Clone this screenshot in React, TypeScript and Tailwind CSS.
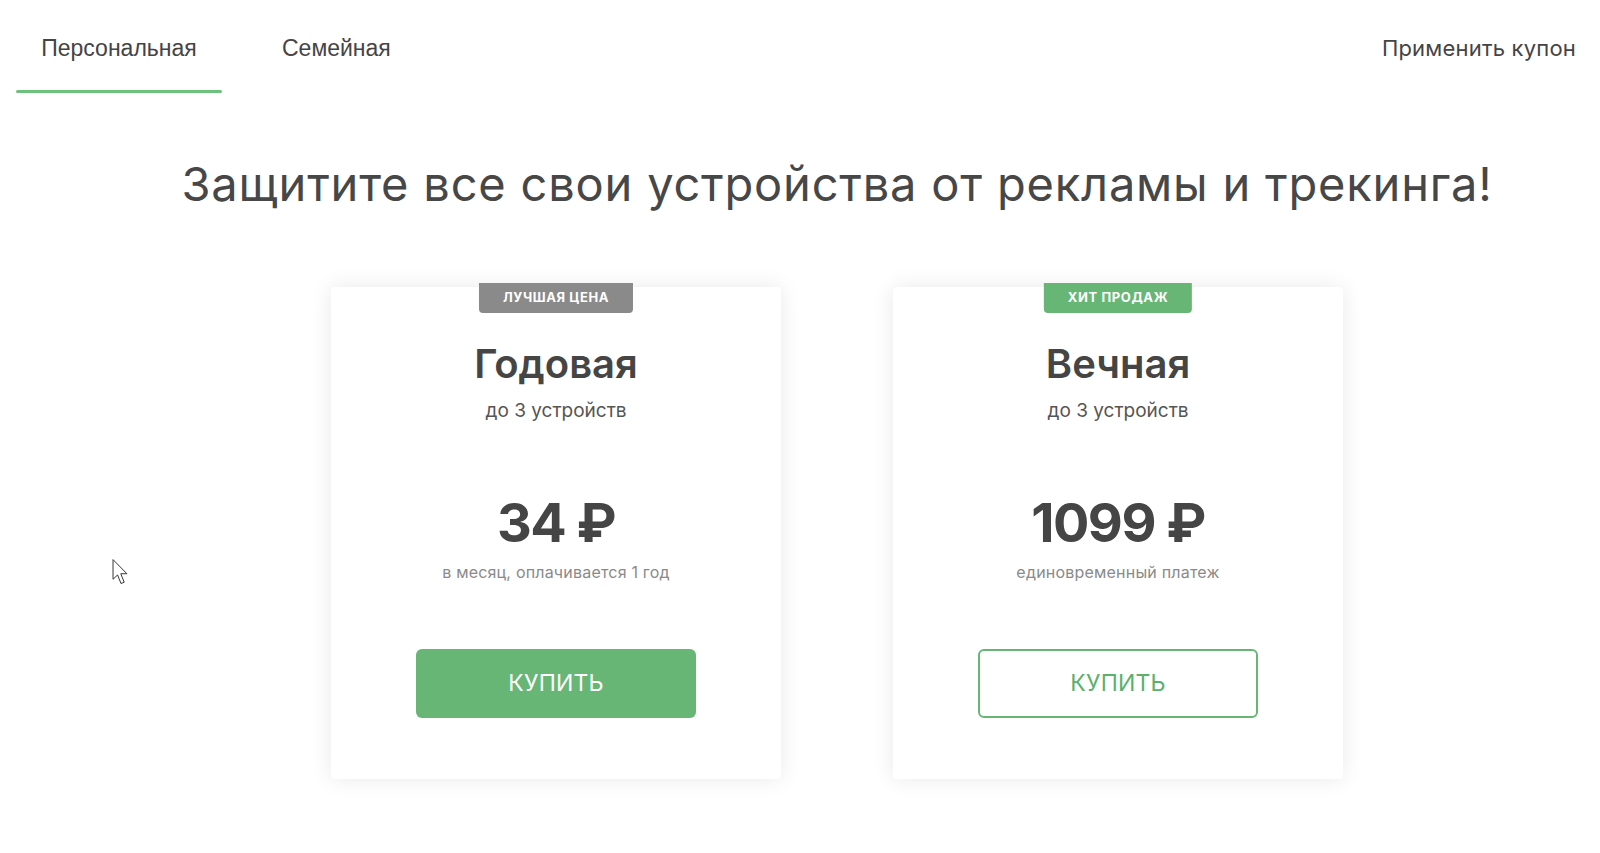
import React from "react";

const inter = { fontFamily: "Inter, 'Noto Sans', sans-serif" };

function Card({
  badge,
  badgeClass,
  title,
  price,
  caption,
  filled,
}: {
  badge: string;
  badgeClass: string;
  title: string;
  price: string;
  caption: string;
  filled: boolean;
}) {
  return (
    <div className="relative flex w-[450px] flex-col items-center rounded-[4px] bg-white pt-[53px] pb-[61px] shadow-[0_0_22px_rgba(0,0,0,0.09)]">
      <div
        className={`absolute top-[-4px] left-1/2 flex h-[30px] -translate-x-1/2 items-center rounded-b-[4px] px-[24px] text-[13px] font-bold tracking-[0.6px] text-white ${badgeClass}`}
      >
        {badge}
      </div>
      <div className="text-[40px] leading-[48px] font-semibold text-[#454545]">{title}</div>
      <div className="mt-[10px] text-[19px] leading-[25px] text-[#555]">до 3 устройств</div>
      <div className="mt-[72px] text-[54px] leading-[56px] font-bold tracking-[-1.5px] text-[#454545]">{price}</div>
      <div className="mt-[11px] text-[16px] leading-[20px] tracking-[0.2px] text-[#8a8a8a]">{caption}</div>
      <button
        className={
          filled
            ? "mt-[67px] flex h-[69px] w-[280px] items-center justify-center rounded-[6px] bg-[#67b675] text-[23px] tracking-[0.2px] text-white"
            : "mt-[67px] flex h-[69px] w-[280px] items-center justify-center rounded-[6px] border-2 border-[#67b675] bg-white text-[23px] tracking-[0.2px] text-[#5cb06b]"
        }
      >
        КУПИТЬ
      </button>
    </div>
  );
}

export default function App() {
  return (
    <div className="relative min-h-[853px] w-full bg-white" style={inter}>
      <div className="flex items-start justify-between pl-4 pr-[24px]">
        <div className="flex">
          <div className="flex w-[206px] flex-col items-center">
            <div
              className="pt-[34px] text-[23px] leading-[28px] text-[#444]"
              style={{ fontFamily: "'Liberation Sans', Arial, sans-serif" }}
            >
              Персональная
            </div>
            <div className="mt-[28px] h-[3px] w-full rounded-full bg-[#6cc27a]" />
          </div>
          <div
            className="ml-[35px] px-[25px] pt-[34px] text-[23px] leading-[28px] text-[#444]"
            style={{ fontFamily: "'Liberation Sans', Arial, sans-serif" }}
          >
            Семейная
          </div>
        </div>
        <div className="pt-[34px] text-[22px] leading-[28px] tracking-[0.2px] text-[#444]">Применить купон</div>
      </div>

      <div className="flex flex-col items-center pl-[74px]">
        <h1 className="mt-[63px] text-[47px] leading-[56px] font-normal tracking-[0.8px] text-[#474747]">
          Защитите все свои устройства от рекламы и трекинга!
        </h1>
        <div className="mt-[75px] flex gap-[112px]">
          <Card
            badge="ЛУЧШАЯ ЦЕНА"
            badgeClass="bg-[#8a8a8a]"
            title="Годовая"
            price="34 ₽"
            caption="в месяц, оплачивается 1 год"
            filled
          />
          <Card
            badge="ХИТ ПРОДАЖ"
            badgeClass="bg-[#67b675]"
            title="Вечная"
            price="1099 ₽"
            caption="единовременный платеж"
            filled={false}
          />
        </div>
      </div>

      <svg
        className="absolute left-[112px] top-[559px]"
        width="18"
        height="27"
        viewBox="0 0 14 22"
      >
        <path
          d="M0.5 0.5 L0.5 16.5 L4.2 13 L7 20 L9.6 18.9 L6.8 12 L11.8 12 Z"
          fill="white"
          stroke="#333"
          strokeWidth="0.8"
          strokeLinejoin="round"
        />
      </svg>
    </div>
  );
}
